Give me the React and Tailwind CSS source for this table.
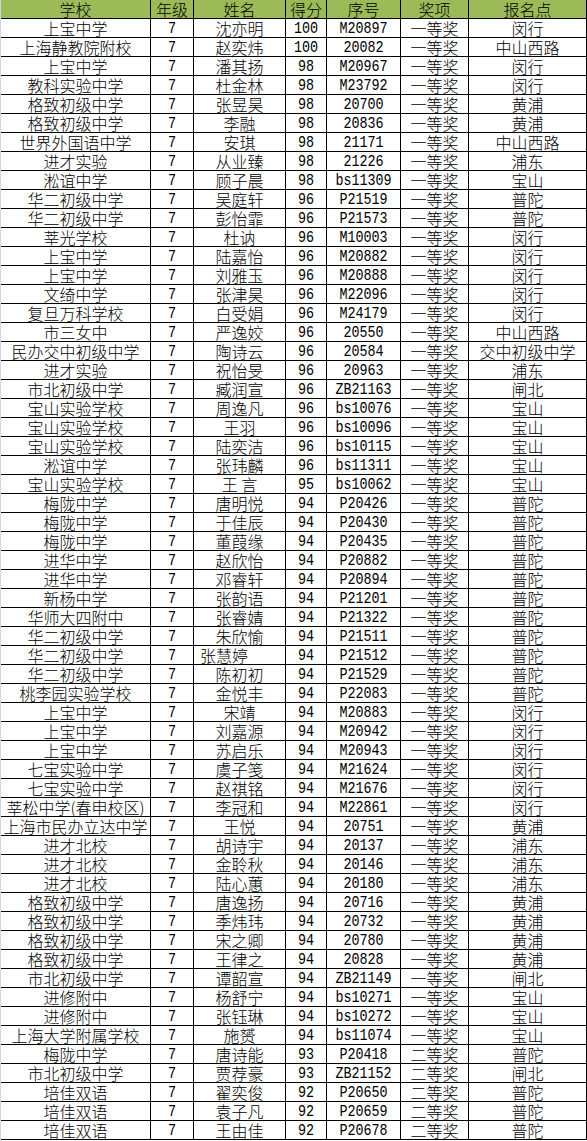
import React from 'react';

const rows = `上宝中学|沈亦明|100|M20897|一等奖|闵行
上海静教院附校|赵奕炜|100|20082|一等奖|中山西路
上宝中学|潘其扬|98|M20967|一等奖|闵行
教科实验中学|杜金林|98|M23792|一等奖|闵行
格致初级中学|张昱昊|98|20700|一等奖|黄浦
格致初级中学|李融|98|20836|一等奖|黄浦
世界外国语中学|安琪|98|21171|一等奖|中山西路
进才实验|从业臻|98|21226|一等奖|浦东
淞谊中学|顾子晨|98|bs11309|一等奖|宝山
华二初级中学|吴庭轩|96|P21519|一等奖|普陀
华二初级中学|彭怡霏|96|P21573|一等奖|普陀
莘光学校|杜讷|96|M10003|一等奖|闵行
上宝中学|陆嘉怡|96|M20882|一等奖|闵行
上宝中学|刘雅玉|96|M20888|一等奖|闵行
文绮中学|张津昊|96|M22096|一等奖|闵行
复旦万科学校|白受娟|96|M24179|一等奖|闵行
市三女中|严逸姣|96|20550|一等奖|中山西路
民办交中初级中学|陶诗云|96|20584|一等奖|交中初级中学
进才实验|祝怡旻|96|20963|一等奖|浦东
市北初级中学|臧润宣|96|ZB21163|一等奖|闸北
宝山实验学校|周逸凡|96|bs10076|一等奖|宝山
宝山实验学校|王羽|96|bs10096|一等奖|宝山
宝山实验学校|陆奕洁|96|bs10115|一等奖|宝山
淞谊中学|张玮麟|96|bs11311|一等奖|宝山
宝山实验学校|王 言|95|bs10062|一等奖|宝山
梅陇中学|唐明悦|94|P20426|一等奖|普陀
梅陇中学|于佳辰|94|P20430|一等奖|普陀
梅陇中学|董葭缘|94|P20435|一等奖|普陀
进华中学|赵欣怡|94|P20882|一等奖|普陀
进华中学|邓睿轩|94|P20894|一等奖|普陀
新杨中学|张韵语|94|P21201|一等奖|普陀
华师大四附中|张睿婧|94|P21322|一等奖|普陀
华二初级中学|朱欣愉|94|P21511|一等奖|普陀
华二初级中学|张慧婷|94|P21512|一等奖|普陀
华二初级中学|陈初初|94|P21529|一等奖|普陀
桃李园实验学校|金悦丰|94|P22083|一等奖|普陀
上宝中学|宋靖|94|M20883|一等奖|闵行
上宝中学|刘嘉源|94|M20942|一等奖|闵行
上宝中学|苏启乐|94|M20943|一等奖|闵行
七宝实验中学|虞子笺|94|M21624|一等奖|闵行
七宝实验中学|赵祺铭|94|M21676|一等奖|闵行
莘松中学(春申校区)|李冠和|94|M22861|一等奖|闵行
上海市民办立达中学|王悦|94|20751|一等奖|黄浦
进才北校|胡诗宇|94|20137|一等奖|浦东
进才北校|金聆秋|94|20146|一等奖|浦东
进才北校|陆心蕙|94|20180|一等奖|浦东
格致初级中学|唐逸扬|94|20716|一等奖|黄浦
格致初级中学|季炜玮|94|20732|一等奖|黄浦
格致初级中学|宋之卿|94|20780|一等奖|黄浦
格致初级中学|王律之|94|20828|一等奖|黄浦
市北初级中学|谭韶宣|94|ZB21149|一等奖|闸北
进修附中|杨舒宁|94|bs10271|一等奖|宝山
进修附中|张钰琳|94|bs10272|一等奖|宝山
上海大学附属学校|施赟|94|bs11074|一等奖|宝山
梅陇中学|唐诗能|93|P20418|二等奖|普陀
市北初级中学|贾荐豪|93|ZB21152|二等奖|闸北
培佳双语|翟奕俊|92|P20650|二等奖|普陀
培佳双语|袁子凡|92|P20659|二等奖|普陀
培佳双语|王由佳|92|P20678|二等奖|普陀`
  .split('\n')
  .map((l) => l.split('|'));

const headers = ['学校', '年级', '姓名', '得分', '序号', '奖项', '报名点'];

const cell = 'h-[19px] border-r border-b border-black flex items-center justify-center whitespace-nowrap leading-[19px]';

const Num = ({ children }) => (
  <span className="inline-block font-['Liberation_Mono',monospace] text-[13.4px] font-normal scale-y-125">{children}</span>
);

export default function App() {
  return (
    <div className="w-[587px] bg-white flex font-['Noto_Sans_CJK_SC',sans-serif] font-light text-[16px] text-black">
      <div className="w-px bg-[#c9d5e8] shrink-0" />
      <div className="grid grid-cols-[150px_43px_92px_41px_74px_68px_118px]">
        {headers.map((h) => (
          <div key={h} className={`${cell} bg-[#9bbb59]`}>{h}</div>
        ))}
        {rows.map((r, i) => (
          <React.Fragment key={i}>
            <div className={cell}>{r[0]}</div>
            <div className={cell}><Num>7</Num></div>
            <div className={`${cell} ${r[1] === '张慧婷' ? 'justify-start pl-[6px]' : ''}`}>{r[1]}</div>
            <div className={cell}><Num>{r[2]}</Num></div>
            <div className={cell}><Num>{r[3]}</Num></div>
            <div className={cell}>{r[4]}</div>
            <div className={cell}>{r[5]}</div>
          </React.Fragment>
        ))}
      </div>
    </div>
  );
}
